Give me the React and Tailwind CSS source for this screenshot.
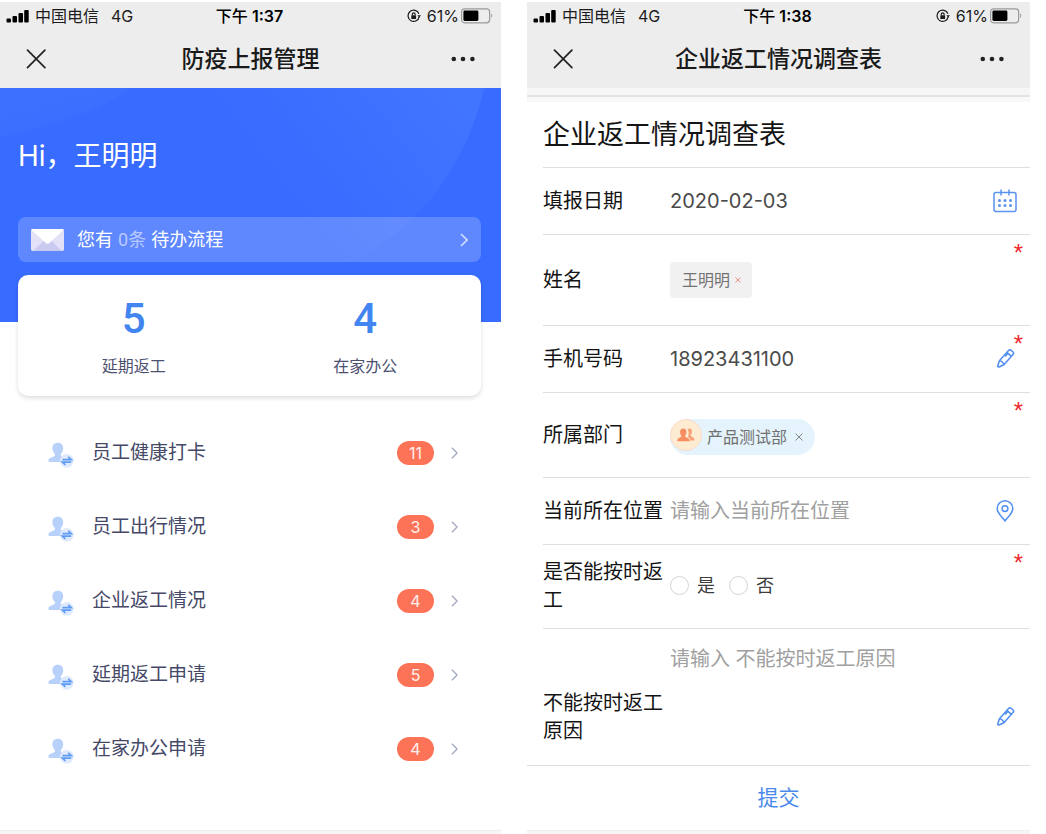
import React from 'react';

function StatusBar({ time }) {
  return (
    <div className="grid h-7 grid-cols-[1fr_auto_1fr] items-center pl-1.5 pr-2 text-base text-[#1c1c1c]">
      <div className="flex items-center">
        <svg className="mr-1.5 h-3.5 w-[23px]" viewBox="0 0 23 14" fill="#000" aria-hidden="true">
          <rect x="0.5" y="9.5" width="4.5" height="4" rx="1" />
          <rect x="6.5" y="7" width="4.5" height="6.5" rx="1" />
          <rect x="12.5" y="4" width="4.5" height="9.5" rx="1" />
          <rect x="18.2" y="1" width="4.5" height="12.5" rx="1" />
        </svg>
        <span>中国电信</span>
        <span className="ml-3">4G</span>
      </div>
      <div className="flex items-center gap-1 font-medium text-black">
        <span>下午</span>
        <span className="font-semibold">{time}</span>
      </div>
      <div className="flex items-center justify-end">
        <svg className="mr-1.5 h-3.5 w-3.5" viewBox="0 0 14 14" fill="none" stroke="#1c1c1c" strokeWidth="1.2" aria-hidden="true">
          <path d="M12.2 7.6A5.600 5.600 0 1 1 11.900 4.800" />
          <path d="M10.400 6.200h3.600l-1.800 2.400z" fill="#1c1c1c" stroke="none" />
          <rect x="4.300" y="6.200" width="4.800" height="3.800" rx="0.6" fill="#1c1c1c" stroke="none" />
          <path d="M5.300 6.300V5.200a1.400 1.400 0 0 1 2.800 0v1.100" />
        </svg>
        <span>61%</span>
        <svg className="ml-0.5 h-4 w-8" viewBox="0 0 32 16" aria-hidden="true">
          <rect x="0.6" y="0.8" width="28" height="14" rx="3" fill="none" stroke="#9a9a9a" strokeWidth="1.2" />
          <rect x="2.4" y="2.600" width="15" height="10.400" rx="1.400" fill="#000" />
          <path d="M30.200 5.600c1.400.6 1.400 3.800 0 4.400z" fill="#9a9a9a" />
        </svg>
      </div>
    </div>
  );
}

function PhoneHeader({ time, title }) {
  return (
    <header className="bg-[#ededed]">
      <StatusBar time={time} />
      <div className="flex h-[58px] items-center justify-between px-[26px]">
        <button type="button" aria-label="关闭" className="flex h-6 w-6 items-center">
          <svg className="h-5 w-5" viewBox="0 0 20 20" fill="none" stroke="#222" strokeWidth="1.7" strokeLinecap="round" aria-hidden="true">
            <path d="M1.500 1.200l17.400 17.400M18.900 1.200L1.500 18.600" />
          </svg>
        </button>
        <h1 className="text-[23px] font-medium leading-8 text-[#1a1a1a]">{title}</h1>
        <button type="button" aria-label="更多" className="flex h-6 w-6 items-center">
          <svg className="h-1.5 w-6" viewBox="0 0 24 6" fill="#222" aria-hidden="true">
            <circle cx="2.800" cy="3" r="2.300" />
            <circle cx="12" cy="3" r="2.300" />
            <circle cx="21.400" cy="3" r="2.300" />
          </svg>
        </button>
      </div>
    </header>
  );
}

function Chevron({ className }) {
  return (
    <svg className={className} viewBox="0 0 8 14" fill="none" stroke="currentColor" strokeWidth="1.6" aria-hidden="true">
      <path d="M1 1l6 6-6 6" />
    </svg>
  );
}

function PersonIcon() {
  return (
    <svg className="h-[26px] w-[26px]" viewBox="0 0 26 26" aria-hidden="true">
      <path
        d="M9.800.8c3.400 0 5.400 2.200 5.400 5.300 0 2.400-.8 4.500-2.100 5.700-.4.4-.5 1.700.1 2.100 1.700 1.100 5.100 1.700 5.900 3.600.3.8.2 2.500-.4 2.500H1.200c-.9 0-1-1.900-.4-2.900.9-1.500 4.300-2 5.800-3.200.6-.5.5-1.700.1-2.100C5.200 10.600 4.400 8.500 4.400 6.100 4.400 3 6.400.8 9.800.8z"
        fill="#b7d1fb"
      />
      <circle cx="18.800" cy="18.800" r="6.900" fill="#dfeafd" />
      <path d="M14.400 17.600h8.800l-3-2.700M23.200 20.200h-8.800l3 2.700" fill="none" stroke="#5f9bf3" strokeWidth="1.700" />
    </svg>
  );
}

const reports = [
  { name: '员工健康打卡', count: 11 },
  { name: '员工出行情况', count: 3 },
  { name: '企业返工情况', count: 4 },
  { name: '延期返工申请', count: 5 },
  { name: '在家办公申请', count: 4 },
];

const totals = [
  { label: '延期返工', value: 5 },
  { label: '在家办公', value: 4 },
];

function Dashboard() {
  return (
    <section className="flex min-w-0 flex-col">
      <PhoneHeader time="1:37" title="防疫上报管理" />
      <div className="relative h-[234px] overflow-hidden bg-[#386bff] pl-[18px] pr-5 pt-12 text-white">
        <svg className="absolute inset-0 h-full w-full" viewBox="0 0 501 234" preserveAspectRatio="none" aria-hidden="true">
          <defs>
            <linearGradient id="arcRight" gradientUnits="userSpaceOnUse" x1="470" y1="0" x2="300" y2="130">
              <stop offset="0" stopColor="#4275ff" />
              <stop offset="1" stopColor="#386bff" />
            </linearGradient>
            <linearGradient id="arcLeft" x1="0" y1="0" x2="0.7" y2="1">
              <stop offset="0" stopColor="#3d72ff" />
              <stop offset="1" stopColor="#3a6dff" />
            </linearGradient>
          </defs>
          <path d="M180 0H484C474 44 456 80 428 114C390 158 340 185 290 200C240 140 200 70 180 0z" fill="url(#arcRight)" />
          <path d="M0 0H132C100 22 60 36 0 50z" fill="url(#arcLeft)" />
        </svg>
        <p className="relative text-[28px] leading-10">Hi，王明明</p>
        <a href="#todo" className="relative mt-[41px] flex h-[45px] items-center rounded-lg bg-white/20 px-[13px]">
          <svg className="h-[22px] w-[33px]" viewBox="0 0 33 22" aria-hidden="true">
            <rect width="33" height="22" rx="1.800" fill="#e2e1f8" />
            <path d="M2 22L13 11.500l3.500 2.500 3.500-2.500L31 22z" fill="#cac9f0" />
            <path d="M1.200 0h30.600c.7 0 .9.700.4 1.200L18 14.200c-.9.800-2.100.8-3 0L.8 1.200C.3.700.5 0 1.200 0z" fill="#fff" />
          </svg>
          <span className="ml-[13px] text-[18px] leading-7">
            您有 <span className="font-[Roboto,'Noto_Sans_CJK_SC',sans-serif] text-[#bac9ff]">0条</span> 待办流程
          </span>
          <Chevron className="ml-auto h-3.5 w-2 text-[#d5e0ff]" />
        </a>
      </div>
      <div className="relative -mt-[47px] ml-[18px] mr-5 grid h-[121px] grid-cols-2 rounded-[10px] bg-white text-center shadow-[0_2px_4px_rgba(0,0,0,0.14)]">
        {totals.map((t) => (
          <div key={t.label} className="flex flex-col items-center pt-5">
            <span className="font-[Roboto,sans-serif] text-[42px] font-medium leading-[48px] text-[#4285f0]">{t.value}</span>
            <span className="mt-[11px] text-base leading-6 text-[#4d5170]">{t.label}</span>
          </div>
        ))}
      </div>
      <nav className="pt-5">
        {reports.map((r) => (
          <a key={r.name} href="#report" className="flex h-[74px] items-center pl-12 pr-[43px]">
            <span className="pt-1">
              <PersonIcon />
            </span>
            <span className="ml-[18px] text-[19px] leading-7 text-[#454967]">{r.name}</span>
            <span className="ml-auto flex h-6 w-[37px] items-center justify-center rounded-full bg-[#fd7358] text-base text-white/90">
              {r.count}
            </span>
            <Chevron className="ml-[17px] h-3 w-[7px] text-[#a5a9bf]" />
          </a>
        ))}
      </nav>
      <div className="min-h-10 flex-1" />
      <footer className="h-1 border-t border-[#eee] bg-[#f6f6f6]" />
    </section>
  );
}

function Required() {
  return (
    <span className="absolute right-[7px] top-1 font-['Liberation_Sans',sans-serif] text-[24px] leading-7 text-[#f0282d]" aria-hidden="true">
      *
    </span>
  );
}

function PencilIcon() {
  return (
    <svg className="h-5 w-5" viewBox="0 0 20 20" fill="none" stroke="#4f8df0" strokeWidth="1.500" strokeLinejoin="round" aria-hidden="true">
      <g transform="rotate(42 10 10)">
        <path d="M7 1.400a2 2 0 0 1 2-2h2a2 2 0 0 1 2 2V15l-2.200 5a.9.9 0 0 1-1.600 0L7 15z" />
        <path d="M7 3.800h6M7 15c1-1.300 5-1.300 6 0M8.400 4v4" />
      </g>
    </svg>
  );
}

function PinIcon() {
  return (
    <svg className="h-[22px] w-[18px]" viewBox="0 0 18 22" fill="none" stroke="#4f8df0" strokeWidth="1.500" strokeLinejoin="round" aria-hidden="true">
      <path d="M9 21C6 17 1.200 13.300 1.200 8.600A7.800 7.800 0 0 1 16.800 8.600C16.800 13.300 12 17 9 21z" />
      <circle cx="9" cy="8.600" r="2.900" />
    </svg>
  );
}

function CalendarIcon() {
  return (
    <svg className="h-6 w-6" viewBox="0 0 24 24" fill="none" stroke="#5b93ee" strokeWidth="1.500" aria-hidden="true">
      <rect x="1" y="3.500" width="22" height="19" rx="2" />
      <path d="M8 .5v6M16 .5v6" />
      <g fill="#5b93ee" stroke="none">
        <circle cx="6.500" cy="11.500" r="1.500" />
        <circle cx="12" cy="11.500" r="1.500" />
        <circle cx="17.500" cy="11.500" r="1.500" />
        <circle cx="6.500" cy="16.500" r="1.500" />
        <circle cx="12" cy="16.500" r="1.500" />
        <circle cx="17.500" cy="16.500" r="1.500" />
      </g>
    </svg>
  );
}

const rowBase = 'relative flex border-b border-[#dfdfdf]';
const labelBase = 'mr-[7px] w-[120px] shrink-0 text-[20px] leading-7 text-[#141414]';
const inputBase = 'min-w-0 flex-1 bg-transparent text-[20px] leading-7 text-[#4a4a4a] outline-none placeholder:text-[#a0a0a0]';
const iconSlot = 'mr-[13px] flex h-7 w-6 shrink-0 items-center justify-center';

function Survey() {
  return (
    <section className="flex min-w-0 flex-col">
      <PhoneHeader time="1:38" title="企业返工情况调查表" />
      <div className="h-[7px] bg-[#f6f6f6]" />
      <div className="h-[7px] border-t-2 border-[#e4e4e4] bg-[#f8f8f8]" />
      <form className="flex flex-1 flex-col" onSubmit={(e) => e.preventDefault()}>
        <div className="ml-4">
          <div className={`${rowBase} h-[66px] items-center`}>
            <h2 className="text-[27px] leading-9 text-[#141414]">企业返工情况调查表</h2>
          </div>
          <div className={`${rowBase} h-[67px] items-center`}>
            <label htmlFor="date" className={labelBase}>填报日期</label>
            <input id="date" type="text" defaultValue="2020-02-03" className={inputBase} />
            <button type="button" aria-label="选择日期" className={iconSlot}><CalendarIcon /></button>
          </div>
          <div className={`${rowBase} h-[91px] items-center`}>
            <span className={labelBase}>姓名</span>
            <span className="flex h-9 items-center gap-1 rounded bg-[#f1f1f1] pl-3 pr-2.5 text-base text-[#737373]">
              王明明
              <button type="button" aria-label="移除王明明" className="flex w-2 justify-center">
                <svg className="h-1.5 w-1.5" viewBox="0 0 6 6" stroke="#f28f8f" strokeWidth="1" aria-hidden="true">
                  <path d="M.5.500l5 5M5.500.500l-5 5" />
                </svg>
              </button>
            </span>
            <Required />
          </div>
          <div className={`${rowBase} h-[67px] items-center`}>
            <label htmlFor="phone" className={labelBase}>手机号码</label>
            <input id="phone" type="tel" defaultValue="18923431100" className={inputBase} />
            <button type="button" aria-label="编辑手机号码" className={iconSlot}><PencilIcon /></button>
            <Required />
          </div>
          <div className={`${rowBase} h-[85px] items-center`}>
            <span className={labelBase}>所属部门</span>
            <span className="mt-1 flex h-9 items-center rounded-full bg-[#e4f3fc] pr-3 text-base text-[#707070]">
              <span className="mr-[5px] flex h-8 w-8 items-center justify-center self-start rounded-full border border-[#fbdcc8] bg-[#fdecd2]">
                <svg className="h-3.5 w-[18px]" viewBox="0 0 18 14" aria-hidden="true">
                  <path d="M10.500 1.500c.5-.8 1.300-1 2-1 1.700 0 2.700 1.300 2.500 3.200-.1 1.600-.8 2.700-1.500 3.500.3 1.900 3.900 1.800 4 4.300v.9h-4.200c0-2.300-2-2.600-2.400-3.800 1.200-1.800 1.100-5-.4-7.100z" fill="#f7a277" />
                  <path d="M6.200.5c2.100 0 3.300 1.500 3.300 3.600 0 1.700-.7 3-1.500 3.800-.2 1.600 4.600 1.600 4.600 4.400v.9H.3v-.9c0-2.800 4.400-2.800 4.200-4.400C3.600 7.100 3 5.800 3 4.100 3 2 4.100.5 6.200.5z" fill="#f68e61" />
                </svg>
              </span>
              产品测试部
              <button type="button" aria-label="移除产品测试部" className="ml-2 flex w-2 justify-center">
                <svg className="h-2 w-2" viewBox="0 0 8 8" stroke="#858585" strokeWidth="1" aria-hidden="true">
                  <path d="M.5.500l7 7M7.500.500l-7 7" />
                </svg>
              </button>
            </span>
            <Required />
          </div>
          <div className={`${rowBase} h-[67px] items-center`}>
            <label htmlFor="place" className={labelBase}>当前所在位置</label>
            <input id="place" type="text" placeholder="请输入当前所在位置" className={inputBase} />
            <button type="button" aria-label="定位" className={iconSlot}><PinIcon /></button>
          </div>
          <fieldset className={`${rowBase} h-[84px] items-center pb-0.5`} aria-labelledby="ontime">
            <span id="ontime" className={labelBase}>是否能按时返工</span>
            <div className="flex items-center gap-3.5 text-[18px] leading-7 text-[#3d3d3d]">
              {['是', '否'].map((option) => (
                <label key={option} className="flex items-center gap-2">
                  <input
                    type="radio"
                    name="ontime"
                    value={option}
                    className="h-[19px] w-[19px] appearance-none rounded-full border border-[#d4d4d4] bg-white checked:border-[5px] checked:border-[#4285f0]"
                  />
                  {option}
                </label>
              ))}
            </div>
            <Required />
          </fieldset>
        </div>
        <div className={`${rowBase} h-[137px] items-end pb-5 pl-4 pt-4`}>
          <label htmlFor="reason" className={labelBase}>不能按时返工原因</label>
          <textarea id="reason" placeholder="请输入 不能按时返工原因" className={`${inputBase} resize-none self-stretch`} />
          <div className="flex h-14 items-center">
            <button type="button" aria-label="编辑原因" className={iconSlot}><PencilIcon /></button>
          </div>
        </div>
        <button type="submit" className="min-h-[60px] flex-1 text-[21px] leading-7 text-[#4889ec]">提交</button>
      </form>
      <footer className="h-1 border-t border-[#eee] bg-[#f6f6f6]" />
    </section>
  );
}

export default function App() {
  return (
    <main className="grid min-h-screen grid-cols-[501fr_503fr] gap-[26px] bg-white pr-4 pt-0.5 font-[Inter,'Noto_Sans_CJK_SC',sans-serif]">
      <Dashboard />
      <Survey />
    </main>
  );
}
